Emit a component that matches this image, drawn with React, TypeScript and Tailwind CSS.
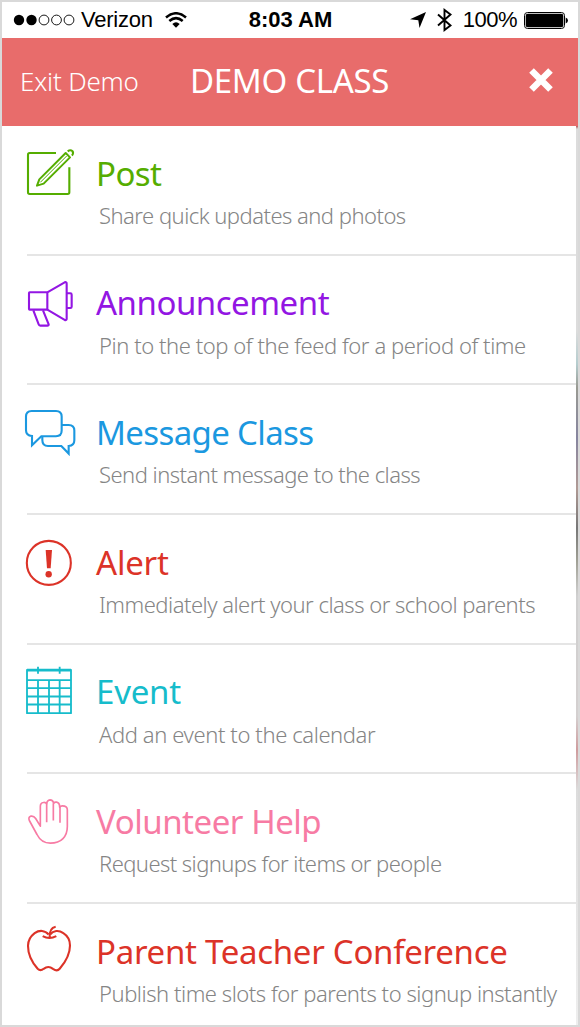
import React from "react";

interface MenuItem {
  title: string;
  description: string;
  color: string;
  titleTracking: string;
  descTracking: string;
  icon: React.ReactNode;
}

const Icon: React.FC<React.PropsWithChildren<{ viewBox: string }>> = ({
  viewBox,
  children,
}) => (
  <svg
    className="w-14 h-14 mt-[18px] shrink-0"
    viewBox={viewBox}
    fill="none"
    stroke="currentColor"
    strokeWidth={6.3}
    strokeLinejoin="round"
  >
    {children}
  </svg>
);

const PostIcon = () => (
  <Icon viewBox="15 12 168 168">
    <path d="M123 39H44q-5 0-5 5v113q0 5 5 5h114q5 0 5-5V82" />
    <path d="M66 137l7-19 79-79 13 13-79 79z" strokeWidth={6} />
    <path d="M76 127l79-79" strokeWidth={3} />
    <path d="M158 34q8-6 14-1 5 6-1 14" strokeWidth={6} />
  </Icon>
);

const AnnouncementIcon = () => (
  <Icon viewBox="15 11.1 168 168">
    <rect x="42" y="66" width="55" height="52" rx="2" />
    <path d="M97 66l52-30q6-2 6 4v105q0 6-6 4l-52-31" />
    <path d="M156 69h10q4 0 4 4v36q0 4-4 4h-10" />
    <path d="M55 120l16 42q1 4 5 4h21q5 0 4-4l-17-42" />
  </Icon>
);

const MessageIcon = () => (
  <Icon viewBox="15 10.2 168 168">
    <path d="M50 34h73q17 0 17 17v42q0 17-17 17H79l-28 27v-28q-18-1-18-17V51q0-17 17-17z" strokeLinejoin="miter" />
    <path d="M141 76h20q17 0 17 17v29q0 16-17 17v23l-22-23H99q-17 0-17-18v-9" strokeLinejoin="miter" />
  </Icon>
);

const AlertIcon = () => (
  <Icon viewBox="15 9.3 168 168">
    <circle cx="101.500" cy="99" r="66" />
    <path d="M92 60h19l-4 55H96z" fill="currentColor" stroke="none" />
    <circle cx="101" cy="133" r="9.500" fill="currentColor" stroke="none" />
  </Icon>
);

const EventIcon = () => (
  <Icon viewBox="15 23.4 168 168">
    <rect x="36" y="44" width="132" height="130" strokeWidth={5.5} />
    <path d="M36 45h132" strokeWidth={8} />
    <path d="M36 75h132M36 99h132M36 124h132M36 148h132" strokeWidth={5.5} />
    <path d="M69 75v99M102 75v99M134 75v99M69 35v21M134 35v21" strokeWidth={5.5} />
  </Icon>
);

const HandIcon = () => (
  <Icon viewBox="15 22.5 168 168">
    <path
      d="M76 125V66q0-11 9-12 7-1 10 4 1-11 10-12 9 0 11 10 3-4 9-3 9 2 9 15 2-4 8-4 15 0 15 12v50c0 30-18 50-51 50-22 0-32-10-40-26L43 108q-4-10 4-13 9-2 15 7z"
      strokeWidth={5}
    />
    <path d="M95 57v56M115 56v52M135 66v49" strokeWidth={5} />
  </Icon>
);

const AppleIcon = () => (
  <Icon viewBox="60 36.6 168 168">
    <path d="M146 74c-11-13-28-14-42-4-13 10-20 22-20 38 0 26 13 51 29 69 6 6 12 5 18 0q14-11 28 0c8 6 14 7 20 0 18-21 31-48 31-70 0-16-9-30-20-37-14-10-30-8-40 4" />
    <path d="M128 79q20 11 41 0M149 84c-1-16 2-30 18-33" />
  </Icon>
);

const items: MenuItem[] = [
  {
    title: "Post",
    description: "Share quick updates and photos",
    color: "text-[#55ad00]",
    titleTracking: "tracking-[-0.55px]",
    descTracking: "tracking-[-0.52px]",
    icon: <PostIcon />,
  },
  {
    title: "Announcement",
    description: "Pin to the top of the feed for a period of time",
    color: "text-[#9316e3]",
    titleTracking: "tracking-[-0.48px]",
    descTracking: "tracking-[-0.44px]",
    icon: <AnnouncementIcon />,
  },
  {
    title: "Message Class",
    description: "Send instant message to the class",
    color: "text-[#1b98e0]",
    titleTracking: "tracking-[-0.63px]",
    descTracking: "tracking-[-0.52px]",
    icon: <MessageIcon />,
  },
  {
    title: "Alert",
    description: "Immediately alert your class or school parents",
    color: "text-[#dc3328]",
    titleTracking: "tracking-[-0.2px]",
    descTracking: "tracking-[-0.5px]",
    icon: <AlertIcon />,
  },
  {
    title: "Event",
    description: "Add an event to the calendar",
    color: "text-[#16bccb]",
    titleTracking: "tracking-[-0.2px]",
    descTracking: "tracking-[-0.4px]",
    icon: <EventIcon />,
  },
  {
    title: "Volunteer Help",
    description: "Request signups for items or people",
    color: "text-[#f77ba4]",
    titleTracking: "tracking-[-0.46px]",
    descTracking: "tracking-[-0.56px]",
    icon: <HandIcon />,
  },
  {
    title: "Parent Teacher Conference",
    description: "Publish time slots for parents to signup instantly",
    color: "text-[#dc3328]",
    titleTracking: "tracking-[-0.29px]",
    descTracking: "tracking-[-0.46px]",
    icon: <AppleIcon />,
  },
];

const StatusBar = () => (
  <div className="h-9 shrink-0 grid grid-cols-[1fr_auto_1fr] items-center pl-[11px] pr-[10px] font-['Liberation_Sans',sans-serif] text-[22px] leading-9 text-black">
    <div className="flex items-center">
      <svg className="w-[62px] h-3" viewBox="0 0 62 12">
        <circle cx="6" cy="6" r="5.200" />
        <circle cx="18.500" cy="6" r="5.200" />
        <g fill="none" stroke="black" strokeWidth="0.900">
          <circle cx="31" cy="6" r="4.900" />
          <circle cx="43.500" cy="6" r="4.900" />
          <circle cx="56" cy="6" r="4.900" />
        </g>
      </svg>
      <span className="ml-[6px] whitespace-nowrap tracking-[-0.25px]">Verizon</span>
      <svg className="ml-3 w-[22px] h-4" viewBox="0 0 22 16" fill="none" stroke="black" strokeWidth="2.500">
        <path d="M1 5.500Q11-3 21 5.500M4.300 9Q11 3.200 17.700 9" />
        <path d="M7.300 12Q11 8.500 14.700 12L11 15.800z" fill="black" stroke="none" />
      </svg>
    </div>
    <span className="font-bold whitespace-nowrap">8:03 AM</span>
    <div className="flex items-center justify-end">
      <svg className="w-4 h-4" viewBox="0 0 16 16">
        <path d="M16 0L9.500 16 8.300 8.300 0 7.300z" />
      </svg>
      <svg className="ml-[11px] w-[15px] h-6" viewBox="0 0 15 24" fill="none" stroke="black" strokeWidth="1.900">
        <path d="M1 6.500l12.500 11L7.500 22V2l6 4.500L1 17.500" />
      </svg>
      <span className="ml-[11px] whitespace-nowrap tracking-[-0.5px]">100%</span>
      <svg className="ml-[7px] w-11 h-[17px]" viewBox="0 0 44 17">
        <rect x="0.500" y="0.500" width="40" height="16" rx="3" fill="none" stroke="black" />
        <rect x="1.700" y="1.700" width="37.600" height="13.600" rx="2" />
        <path d="M41.700 5.500q2.300 1 2.300 3t-2.300 3z" />
      </svg>
    </div>
  </div>
);

const Header = () => (
  <div className="h-[88px] shrink-0 grid grid-cols-[170px_1fr_auto] items-center bg-[#e86c6b] pl-[18px] pr-[25px] text-white">
    <span className="font-light text-[26px] leading-none whitespace-nowrap pb-[3px] tracking-[-0.2px]">
      Exit Demo
    </span>
    <span className="text-[33px] leading-none whitespace-nowrap pb-[4px] tracking-[-0.3px]">
      DEMO CLASS
    </span>
    <svg className="w-6 h-6 mb-[5px]" viewBox="0 0 24 24" stroke="white" strokeWidth="6.500">
      <path d="M2.500 2.500l19 19M21.500 2.500l-19 19" />
    </svg>
  </div>
);

const MenuRow: React.FC<{ item: MenuItem; last: boolean }> = ({ item, last }) => (
  <div className="h-[129.700px] shrink-0 pl-[18px]">
    <div className={`flex h-full ${item.color}`}>
      {item.icon}
      <div className="pl-[20px] pt-[27.5px] whitespace-nowrap">
        <h3 className={`text-[33px] leading-10 ${item.titleTracking}`}>
          {item.title}
        </h3>
        <p
          className={`mt-[6.5px] pl-[3px] text-[22px] leading-[30px] font-light text-[#858585] ${item.descTracking}`}
        >
          {item.description}
        </p>
      </div>
    </div>
    {!last && <div className="-mt-[2px] ml-[7px] h-[2px] bg-[#e5e5e5]" />}
  </div>
);

export default function App() {
  return (
    <div className="w-[580px] h-[1027px] flex flex-col overflow-hidden border-2 border-[#d9d9d9] bg-white font-['Noto_Sans',sans-serif]">
      <StatusBar />
      <Header />
      <div className="flex flex-1 min-h-0">
        <div className="flex-1 min-w-0 flex flex-col overflow-hidden">
          {items.map((item, index) => (
            <MenuRow
              key={item.title}
              item={item}
              last={index === items.length - 1}
            />
          ))}
        </div>
        {/* Sliver of the feed visible behind the menu */}
        <div className="w-[2px] bg-[linear-gradient(to_bottom,#b25a5a_0px,#dcdcdc_3px,#dcdcdc_205px,#b5cdcf_238px,#999a92_262px,#86859f_312px,#b09a95_362px,#777777_402px,#a0a095_435px,#d0d0d0_470px,#d4d0d0_590px,#cf9c9e_624px,#dcdcdc_664px,#eeeeee_899px)]" />
      </div>
    </div>
  );
}
